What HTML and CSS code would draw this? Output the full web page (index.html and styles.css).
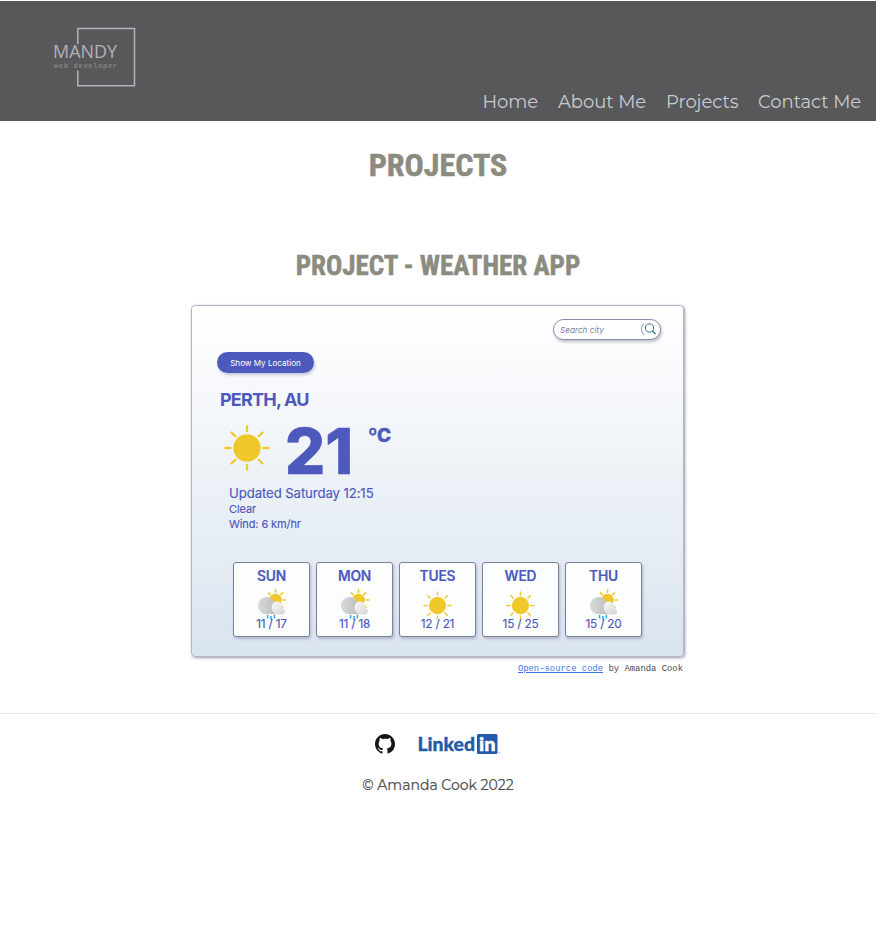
FILE: index.html
```
<!DOCTYPE html>
<html lang="en">
<head>
<meta charset="utf-8">
<title>Projects</title>
<link rel="stylesheet" href="styles.css">
</head>
<body>
<svg class="defs" width="0" height="0" aria-hidden="true">
  <defs>
    <linearGradient id="dark" x1="0" x2="1"><stop offset="0" stop-color="#dadada"/><stop offset="1" stop-color="#bcbcbc"/></linearGradient>
    <linearGradient id="light" x1="0" x2="1" y2="1"><stop offset="0" stop-color="#fafafa"/><stop offset="1" stop-color="#d4d4d4"/></linearGradient>
    <symbol id="sun" viewBox="0 0 46 46">
      <circle cx="23" cy="23" r="13.7" fill="#efc92b"/>
      <path d="M23 1.5v4.7M23 39.8v4.7M1.5 23h5.2M39.3 23h5.2M7.5 7.5l3.7 3.7M34.8 34.8l3.7 3.7M38.5 7.5l-3.7 3.7M11.2 34.8l-3.7 3.7" stroke="#efc92b" stroke-width="2.3" stroke-linecap="round"/>
    </symbol>
    <symbol id="rain" viewBox="0 0 30 34">
      <circle cx="18.500" cy="11" r="6.300" fill="#efc92b"/>
      <path d="M18.500 .8v2.500M25.600 3.900l-1.700 1.700M28.600 11h-2.500M26 18.300l-1.700-1.700M11.400 3.900l1.700 1.700" stroke="#efc92b" stroke-width="1.600" stroke-linecap="round"/>
      <path d="M9.500 8a8.600 8.600 0 1 0 0 17.200h10L17.500 14A8.600 8.600 0 0 0 9.500 8z" fill="url(#dark)"/>
      <path d="M25 25.500H20.500C16 24.500 14 20.500 14.800 16.500c1.500-5.500 9-5.500 10.700.5 .3 1 .4 1.500.3 2.500 3.300 1 3 5.800-.8 6z" fill="url(#light)"/>
      <path d="M10.600 26v3.500M14 27v4M17.400 26v3.500" stroke="#2aa5f5" stroke-width="1.500"/>
    </symbol>
  </defs>
</svg>
<header class="header">
  <svg class="logo" width="90" height="66" viewBox="50 24 90 66">
    <path d="M77.800 44V28.600h56.700v57.200H77.800V70.500" fill="none" stroke="#b1b2bb" stroke-width="1.500"/>
    <text class="logo-name" x="53" y="58" textLength="64" lengthAdjust="spacingAndGlyphs">MANDY</text>
    <text class="logo-role" x="54" y="67.500" textLength="63">web developer</text>
  </svg>
  <nav class="nav">
    <a class="home">Home</a><a class="about">About Me</a><a class="work">Projects</a><a class="contact">Contact Me</a>
  </nav>
</header>
<main>
  <h1>PROJECTS</h1>
  <h2>PROJECT - WEATHER APP</h2>
  <section class="app">
    <div class="search"><span>Search city</span>
      <svg width="17" height="14" viewBox="0 0 17 14" fill="none"><path d="M4 1Q-1 7 4 13" stroke="#7d93a8" stroke-width=".9"/><circle cx="9.500" cy="6" r="4.100" stroke="#3c6e8b"/><path d="M12.500 9l3 3" stroke="#3c6e8b" stroke-width="1.200"/></svg>
    </div>
    <div class="locate"><span>Show My Location</span></div>
    <div class="city">PERTH, AU</div>
    <div class="now"><svg width="46" height="46"><use href="#sun"/></svg><span class="temp">21</span><span class="unit">ºC</span></div>
    <div class="updated">Updated Saturday 12:15</div>
    <div class="detail">Clear</div>
    <div class="detail wind">Wind: 6 km/hr</div>
    <div class="days">
      <div class="day"><b>SUN</b><svg class="rain"><use href="#rain"/></svg><span>11 / 17</span></div>
      <div class="day"><b>MON</b><svg class="rain"><use href="#rain"/></svg><span>11 / 18</span></div>
      <div class="day"><b>TUES</b><svg class="sun"><use href="#sun"/></svg><span>12 / 21</span></div>
      <div class="day"><b>WED</b><svg class="sun"><use href="#sun"/></svg><span>15 / 25</span></div>
      <div class="day"><b>THU</b><svg class="rain"><use href="#rain"/></svg><span>15 / 20</span></div>
    </div>
  </section>
  <p class="credit"><a>Open-source code</a> by Amanda Cook</p>
</main>
<footer>
  <div class="social">
    <svg width="20" height="20" viewBox="0 0 16 16"><path fill="#161618" d="M8 0C3.580 0 0 3.580 0 8c0 3.540 2.290 6.530 5.470 7.590.4.070.55-.17.55-.38 0-.19-.01-.82-.01-1.490-2.010.37-2.530-.49-2.690-.94-.09-.23-.48-.94-.82-1.130-.28-.15-.68-.52-.01-.53.63-.01 1.080.58 1.230.82.72 1.210 1.870.87 2.330.66.07-.52.28-.87.51-1.070-1.780-.2-3.640-.89-3.640-3.950 0-.87.31-1.590.82-2.150-.08-.2-.36-1.020.08-2.120 0 0 .67-.21 2.200.82.64-.18 1.320-.27 2-.27s1.360.09 2 .27c1.530-1.040 2.200-.82 2.200-.82.44 1.100.16 1.920.08 2.120.51.56.82 1.270.82 2.150 0 3.070-1.870 3.750-3.650 3.950.29.25.54.73.54 1.480 0 1.070-.01 1.930-.01 2.200 0 .21.15.46.55.38A8.010 8.010 0 0 0 16 8c0-4.420-3.580-8-8-8z"/></svg>
    <svg width="83" height="20" viewBox="0 0 83 20">
      <text class="li-word" x="-.5" y="17" textLength="57.500" lengthAdjust="spacingAndGlyphs">Linked</text>
      <rect x="59" width="20.500" height="20" rx="1.500" fill="#2459a9"/>
      <text class="li-in" x="61" y="17" textLength="16.500" lengthAdjust="spacingAndGlyphs">in</text>
      <circle cx="81.500" cy="18.500" r=".8" fill="#9db5d8"/>
    </svg>
  </div>
  <p class="copy">© Amanda Cook 2022</p>
</footer>
</body>
</html>
```
FILE: styles.css
```
* { box-sizing: border-box; }
body { margin: 0; width: 876px; padding-top: 1px; background: #fff; font-family: Montserrat, Inter, sans-serif; }
.defs { display: block; }
.header { height: 120px; background: #58585a; display: flex; justify-content: space-between; padding: 23px 15px 0 50px; }
.logo-name { font: 400 18px "Open Sans", sans-serif; fill: #b0b1b8; }
.logo-role { font: 700 7px "Liberation Mono", monospace; fill: #85857a; }
.nav { display: flex; gap: 20px; align-self: flex-end; height: 30px; line-height: 22px; font-size: 18px; font-weight: 400; letter-spacing: -.06px; color: #c9cbd0; white-space: nowrap; }
.home { width: 55.5px; }
.about { width: 88px; }
.work { width: 72px; }
.contact { width: 103px; }
h1, h2 { margin: 0; text-align: center; color: #8b8b7f; font-family: "Roboto Condensed", Roboto, sans-serif; font-weight: 700; white-space: nowrap; -webkit-text-stroke: .5px #8b8b7f; }
h1 { height: 89px; padding-top: 24px; font-size: 32px; line-height: 40px; }
h2 { height: 95px; padding-top: 38px; font-size: 27px; line-height: 36px; }
.app { width: 493px; height: 352px; margin-left: 191px; padding: 13px 22px 0 25px; border: 1px solid #b2b7c8; border-radius: 4px; background: linear-gradient(#fff, #dae4ef); box-shadow: 1px 1px 3px #9995aa; color: #4d59bd; font-family: Inter, sans-serif; display: flex; flex-direction: column; white-space: nowrap; }
.search { align-self: flex-end; width: 108px; height: 21px; border: 1.5px solid #858ca3; border-radius: 11px; background: #fff; box-shadow: 1px 2px 3px #bdbdcb; padding: 0 3px 2px 6px; display: flex; align-items: center; justify-content: space-between; font-size: 8.2px; font-style: italic; color: #7d8297; }
.search span { padding-top: 2px; }
.locate { width: 97px; height: 21px; margin-top: 12px; border-radius: 11px; background: #4d59bd; box-shadow: 1px 2px 3px #c5c7d8; color: #fff; font-size: 8.1px; line-height: 22px; text-align: center; }
.city { margin: 15px 0 0 3px; height: 24px; line-height: 24px; font-size: 18px; font-weight: 700; letter-spacing: -.8px; }
.now { height: 64px; margin-left: 7px; padding-top: 13px; display: flex; }
.temp { margin: -4px 0 0 15px; width: 70px; font-size: 63px; line-height: 60px; font-weight: 800; -webkit-text-stroke: .7px #4d59bd; }
.unit { margin: -1px 0 0 13px; font-size: 19px; line-height: 24px; font-weight: 800; letter-spacing: -.4px; -webkit-text-stroke: .4px #4d59bd; }
.updated { margin: 9px 0 0 12px; height: 17px; line-height: 16px; font-size: 13.2px; letter-spacing: -.1px; -webkit-text-stroke: .15px #4d59bd; }
.detail { margin-left: 12px; height: 15px; line-height: 15px; font-size: 11px; letter-spacing: -.1px; -webkit-text-stroke: .15px #4d59bd; }
.days { display: flex; gap: 6px; margin: 30px 0 0 16px; }
.day { width: 77px; height: 75px; border: 1.500px solid #7b829b; border-radius: 3px; background: #fcfefe; box-shadow: 1px 2px 3px #b0b5cb; display: flex; flex-direction: column; align-items: center; font-size: 11.800px; -webkit-text-stroke: .15px #4d59bd; letter-spacing: -.2px; }
.day b { margin-top: 5px; font-size: 13.800px; line-height: 17px; font-weight: 600; }
.rain { width: 30px; height: 34px; margin-top: 4px; }
.sun { width: 29px; height: 29px; margin: 6px 0 3px; }
.day span { margin-top: -6px; line-height: 14px; }
.credit { width: 683px; height: 56px; margin: 0; padding-top: 5px; text-align: right; font: 8.900px/14px "Liberation Mono", monospace; color: #4a4a4a; }
.credit a { color: #3478e5; text-decoration: underline; }
footer { border-top: 1px solid #e5e6e8; padding-top: 20px; }
.social { display: flex; gap: 23px; padding-left: 375px; }
.li-word { font: 900 18px Lato, sans-serif; fill: #2459a9; stroke: #2459a9; stroke-width: .3px; }
.li-in { font: 900 18px Lato, sans-serif; fill: #fff; stroke: #fff; stroke-width: .4px; }
.copy { margin: 21px 0 0; text-align: center; font-size: 14px; line-height: 20px; color: #4d4d4f; -webkit-text-stroke: .2px #4d4d4f; }
```
